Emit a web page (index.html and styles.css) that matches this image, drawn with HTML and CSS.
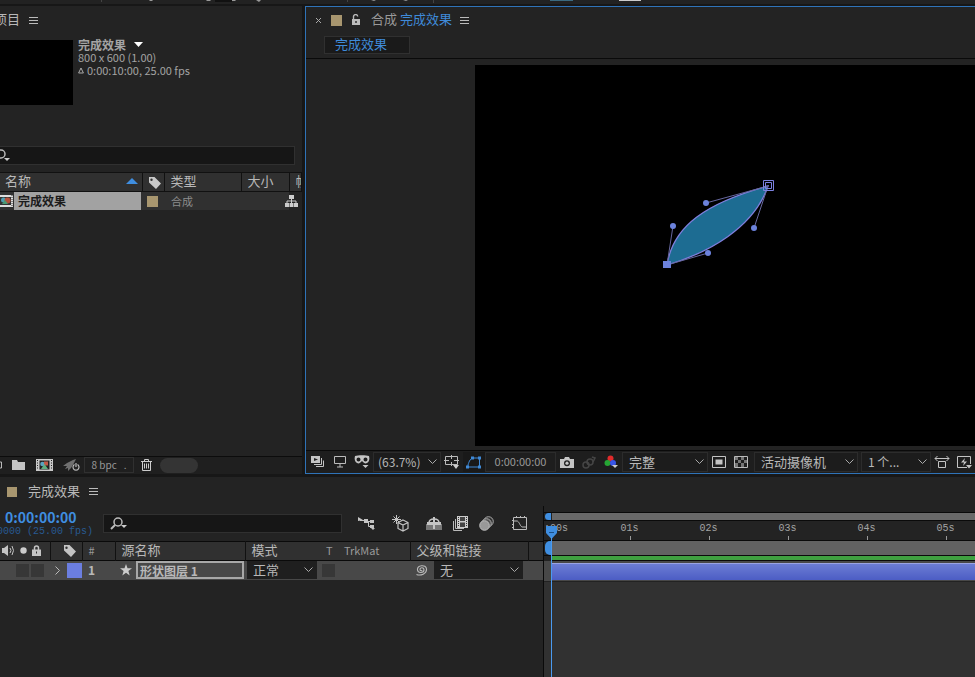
FILE: index.html
```html
<!DOCTYPE html>
<html lang="zh-CN">
<head>
    <meta charset="UTF-8">
    <meta name="viewport" content="width=device-width, initial-scale=1.0">
    <title>完成效果</title>
    <link rel="stylesheet" href="styles.css">
</head>
<body>

    <div class="toolbar">
        <svg width="700" height="3" viewBox="0 0 700 3">
            <path fill="#999" d="M149 0h4l-1 1h-2zM206 0h5l-1 1h-3zM231 0h5l-1 1h-3zM256 0h5l-2 2zM371 0h5l-2 1zM403 0h5l-2 1z"/>
            <path fill="#111" d="M215 0h17v2h-17z"/>
            <path fill="#444" d="M101 0h1v2h-1zM347 0h1v2h-1zM433 0h1v3h-1z"/>
            <path fill="#3b6a80" d="M550 0h23v1h-23z"/>
            <path fill="#ccc" d="M619 0h22v1h-22z"/>
        </svg>
    </div>

    <div class="workspace">
        <section class="panel project">
            <header class="panel-header project-header">
                <h2>项目</h2>
                <button class="menu" aria-label="面板菜单"><svg width="9" height="9" viewBox="0 0 9 9"><path d="M0 1.500h9M0 4.500h9M0 7.500h9"/></svg></button>
            </header>

            <div class="info">
                <div class="thumb"></div>
                <div class="info-text">
                    <strong>完成效果 <svg width="9" height="5" viewBox="0 0 9 5"><path fill="#fff" d="M0 0h9L4.500 5z"/></svg></strong>
                    <p>800 x 600 (1.00)</p>
                    <p><svg width="6" height="7" viewBox="0 0 6 7"><path fill="none" stroke="#aaa" d="M3 1L.6 6h4.800z"/></svg> 0:00:10:00, 25.00 fps</p>
                </div>
            </div>

            <label class="search project-search">
                <svg width="18" height="14" viewBox="0 0 18 14"><circle cx="8" cy="5" r="4" fill="none" stroke="#bbb" stroke-width="1.500"/><path d="M5 8L1 12" stroke="#bbb" stroke-width="2"/><path fill="#ccc" d="M11 9h6l-3 3z"/></svg>
                <input type="search" aria-label="搜索项目">
            </label>

            <table class="files">
                <colgroup><col class="f-name"><col class="f-label"><col class="f-type"><col class="f-size"><col></colgroup>
                <thead>
                    <tr>
                        <th><span class="sorted">名称 <svg width="12" height="6" viewBox="0 0 12 6"><path fill="#3f8ee0" d="M0 6l6-6 6 6z"/></svg></span></th>
                        <th class="icon-cell"><svg width="13" height="13" viewBox="0 0 13 13"><path fill="#c8c8c8" fill-rule="evenodd" d="M1 1h5.500L13 7.500 8 13 1 6.500zM3.500 2.500a1.200 1.200 0 100 2.400 1.200 1.200 0 000-2.400z"/></svg></th>
                        <th>类型</th>
                        <th>大小</th>
                        <th>帧</th>
                    </tr>
                </thead>
                <tbody>
                    <tr>
                        <td class="file-name">
                            <span class="file"><svg width="14" height="14" viewBox="0 0 14 14"><path fill="#ddd" d="M0 1h13v12H0z"/><path fill="#333" d="M0 3h11v8H0z"/><path stroke="#333" stroke-dasharray="1 1" d="M12 1v12"/><circle cx="3.500" cy="6" r="2.500" fill="#4d9eb0"/><circle cx="7.500" cy="6.500" r="3" fill="#b4503c"/><path fill="#4a9a72" d="M2 10l3-4 3 4z"/></svg><b>完成效果</b></span>
                        </td>
                        <td class="icon-cell"><i class="swatch"></i></td>
                        <td class="kind">合成</td>
                        <td></td>
                        <td class="flow"><svg width="13" height="12" viewBox="0 0 13 12"><path fill="#ccc" d="M4 0h5v4H4zM0 8h4v4H0zM4.500 8h4v4h-4zM9 8h4v4H9z"/><path fill="none" stroke="#ccc" d="M6.500 4v4M2 8V6h9v2"/></svg></td>
                    </tr>
                </tbody>
            </table>

            <footer class="project-footer">
                <button class="cut" aria-label="解释素材"><svg width="8" height="10" viewBox="0 0 8 10"><path fill="none" stroke="#bbb" d="M0 2h7.500v6H0"/></svg></button>
                <button aria-label="新建文件夹"><svg width="14" height="12" viewBox="0 0 14 12"><path fill="#c4c4c4" d="M0 1h5l1 2h7v8H0z"/></svg></button>
                <button aria-label="新建合成"><svg width="17" height="12" viewBox="0 0 17 12"><path fill="#c8c8c8" d="M0 0h17v12H0z"/><path fill="#222" d="M3.500 1.500h10v9h-10z"/><path stroke="#222" stroke-dasharray="1 1.500" d="M1.500 1v10M15.500 1v10"/><circle cx="6.500" cy="5" r="2.300" fill="#5aa4c0"/><path fill="#c05a48" d="M8 2.500h4v4H8z"/><path fill="#5fae80" d="M5 10l3.500-5L12 10z"/></svg></button>
                <button aria-label="项目设置"><svg width="17" height="13" viewBox="0 0 17 13"><path fill="#707070" d="M0 7l4-3 6-3 3-1-2 4-3 5-3 3V9L2 10l2-3z"/><circle cx="13" cy="8" r="3.500" fill="#232323"/><path fill="none" stroke="#bbb" stroke-width="1.200" d="M11.500 5.500a3 3 0 103 0M13 4v4"/></svg></button>
                <button class="bpc">8 bpc <span>.</span></button>
                <button class="trash" aria-label="删除"><svg width="11" height="12" viewBox="0 0 11 12"><path fill="none" stroke="#ccc" d="M0 2.500h11M3.500 2V.5h4V2M1.500 3v8.500h8V3M3.500 4.500v5M5.500 4.500v5M7.500 4.500v5"/></svg></button>
                <span class="pill"></span>
            </footer>
        </section>

        <section class="panel comp">
            <header class="panel-header comp-header">
                <button class="close" aria-label="关闭"><svg width="5" height="5" viewBox="0 0 5 5"><path stroke="#aaa" d="M0 0l5 5M5 0L0 5"/></svg></button>
                <i class="swatch"></i>
                <button class="lock" aria-label="锁定"><svg width="10" height="12" viewBox="0 0 10 12"><path fill="none" stroke="#bbb" stroke-width="1.400" d="M2.500 6V3a2 2 0 014.200-.5"/><path fill="#bbb" fill-rule="evenodd" d="M1 5h8v6H1zM4.300 7v2h1.400V7z"/></svg></button>
                <h2><span>合成</span> 完成效果</h2>
                <button class="menu" aria-label="面板菜单"><svg width="9" height="9" viewBox="0 0 9 9"><path d="M0 1.500h9M0 4.500h9M0 7.500h9"/></svg></button>
            </header>
            <nav class="crumbs"><button>完成效果</button></nav>

            <div class="stage">
                <div class="canvas">
                    <svg class="leaf" width="120" height="100" viewBox="0 0 120 100">
                        <path fill="#1d6c92" stroke="#7f7fdc" stroke-width="1.300" d="M11 89C17 50 50 27 112 10C98 52 52 77 11 89z"/>
                        <path stroke="#66679f" d="M11 89L17 50M11 89L52 77M112 10L50 27M112 10L98 52"/>
                        <g fill="#6c82dc"><circle cx="17" cy="50" r="3"/><circle cx="52" cy="77" r="3"/><circle cx="50" cy="27" r="3"/><circle cx="98" cy="52" r="3"/><path d="M7 85h8v7H7z"/></g>
                        <path fill="none" stroke="#7c82e0" d="M107.500 4.500h10v10h-10zM109.500 6.500h6v6h-6z"/>
                    </svg>
                </div>
            </div>

            <footer class="comp-footer">
                <button aria-label="始终预览此视图"><svg width="14" height="12" viewBox="0 0 14 12"><path fill="#c4c4c4" d="M0 0h9v7H0z"/><path fill="#222" d="M3 2l4 1.500L3 5z"/><path fill="none" stroke="#c4c4c4" d="M10.500 2v6.500H3M12.500 4.500v6H5"/></svg></button>
                <button aria-label="主查看器"><svg width="12" height="12" viewBox="0 0 12 12"><path fill="none" stroke="#bbb" d="M.5.5h11v7H.5zM6 8v3M3 11h6"/></svg></button>
                <button aria-label="蒙版"><svg width="16" height="14" viewBox="0 0 16 14"><path fill="#c4c4c4" fill-rule="evenodd" d="M1 1c3-1 11-1 14 0 1 3 0 6-2 7-2 1-3 0-5-2-2 2-3 3-5 2C1 7 0 4 1 1zM4.500 2.500a2 2 0 100 4 2 2 0 000-4zM11.500 2.500a2 2 0 100 4 2 2 0 000-4zM8.500 10h6l-3 3z"/></svg></button>
                <span class="pick"><select class="zoom" aria-label="放大率"><option>(63.7%)</option></select><svg width="9" height="6" viewBox="0 0 9 6"><path d="M.5.5l4 4 4-4"/></svg></span>
                <button aria-label="网格和参考线"><svg width="16" height="14" viewBox="0 0 16 14"><path fill="none" stroke="#bbb" d="M1.500 1.500h12v8h-12zM7.500 0v4M7.500 7v4M0 5.500h5M10 5.500h5"/><path fill="#ccc" d="M9 10h6l-3 4z"/></svg></button>
                <button class="active" aria-label="形状路径"><svg width="16" height="13" viewBox="0 0 16 13"><path fill="none" stroke="#3f8ad8" d="M2 11V9c1-4 3-7 5-7h6.500v9z"/><path fill="#3f8ad8" d="M0 9.500h3v3H0zM5 .5h3v3H5zM12 .5h3v3h-3zM12 9.500h3v3h-3z"/></svg></button>
                <button class="time">0:00:00:00</button>
                <button aria-label="拍摄快照"><svg width="14" height="11" viewBox="0 0 14 11"><path fill="#c4c4c4" fill-rule="evenodd" d="M0 2h4l1-2h4l1 2h4v9H0zM7 3.200a3 3 0 100 6 3 3 0 000-6z"/><circle cx="7" cy="6.200" r="1.600" fill="#c4c4c4"/></svg></button>
                <button aria-label="显示快照"><svg width="14" height="13" viewBox="0 0 14 13"><g fill="none" stroke="#454545" stroke-width="1.500"><circle cx="4" cy="9" r="3"/><circle cx="8" cy="6" r="3"/><path d="M10 1l3 1-2 4"/></g></svg></button>
                <button aria-label="通道"><svg width="14" height="14" viewBox="0 0 14 14"><circle cx="6.500" cy="3.500" r="3" fill="#e02b2b"/><circle cx="3.500" cy="8" r="3" fill="#26a534"/><circle cx="9" cy="8" r="3" fill="#3855e8"/><path fill="#ccc" d="M8 10h6l-3 3z"/></svg></button>
                <span class="pick"><select class="quality" aria-label="分辨率"><option>完整</option></select><svg width="9" height="6" viewBox="0 0 9 6"><path d="M.5.5l4 4 4-4"/></svg></span>
                <button aria-label="目标区域"><svg width="14" height="12" viewBox="0 0 14 12"><path fill="none" stroke="#c4c4c4" d="M.5.5h13v11H.5z"/><path fill="#c4c4c4" d="M3.500 3.500h7v5h-7z"/></svg></button>
                <button aria-label="透明网格"><svg width="14" height="12" viewBox="0 0 14 12"><path fill="none" stroke="#bbb" d="M.5.5h13v11H.5z"/><path fill="#777" d="M1 1h3v3H1zM7 1h3v3H7zM4 4h3v3H4zM10 4h3v3h-3zM1 7h3v4H1zM7 7h3v4H7z"/></svg></button>
                <span class="pick camera-pick"><select class="camera" aria-label="3D 视图"><option>活动摄像机</option></select><svg width="9" height="6" viewBox="0 0 9 6"><path d="M.5.5l4 4 4-4"/></svg></span>
                <span class="pick view-pick"><select class="views" aria-label="视图布局"><option>1 个...</option></select><svg width="9" height="6" viewBox="0 0 9 6"><path d="M.5.5l4 4 4-4"/></svg></span>
                <button aria-label="像素长宽比校正"><svg width="16" height="12" viewBox="0 0 16 12"><path fill="none" stroke="#c4c4c4" d="M1 2.500h14M3.500 0L1 2.500 3.500 5M12.500 0L15 2.500 12.500 5M4.500 5.500h7v6h-7z"/></svg></button>
                <button aria-label="快速预览"><svg width="15" height="13" viewBox="0 0 15 13"><path fill="none" stroke="#c4c4c4" d="M10 11.500H.5V.5h13V8"/><path fill="#c4c4c4" d="M8 2L4 6.500h3L6 10l4-4.500H7zM9 9h6l-3 3.500z"/></svg></button>
            </footer>
        </section>
    </div>

    <section class="panel timeline">
        <header class="panel-header timeline-header">
            <i class="swatch"></i>
            <h2>完成效果</h2>
            <button class="menu" aria-label="面板菜单"><svg width="9" height="9" viewBox="0 0 9 9"><path d="M0 1.500h9M0 4.500h9M0 7.500h9"/></svg></button>
        </header>

        <div class="timeline-body">
            <div class="layers">
                <div class="layer-tools">
                    <div class="clock">
                        <strong>0:00:00:00</strong>
                        <span>0000 (25.00 fps)</span>
                    </div>
                    <label class="search layer-search">
                        <svg width="18" height="14" viewBox="0 0 18 14"><circle cx="8" cy="5" r="4" fill="none" stroke="#bbb" stroke-width="1.500"/><path d="M5 8L1 12" stroke="#bbb" stroke-width="2"/><path fill="#ccc" d="M11 8h6l-3 3z"/></svg>
                        <input type="search" aria-label="搜索图层">
                    </label>
                    <button aria-label="合成微型流程图"><svg width="17" height="13" viewBox="0 0 17 13"><path fill="#c4c4c4" d="M0 0l5 3-5 1zM6 2h4v4H6zM12 3h4v3h-4zM12 8h4v3h-4zM13 11h4l-2 2z"/><path fill="none" stroke="#c4c4c4" d="M2 3.500h4M10 4.500h2M10.500 4.500v5H12"/></svg></button>
                    <button aria-label="草图 3D"><svg width="17" height="17" viewBox="0 0 17 17"><g fill="none" stroke="#c4c4c4"><path d="M4.500 0v9M0 4.500h9M1.500 1.500l6 6M7.500 1.500l-6 6"/><path fill="#222" stroke-width="1.200" d="M11 5l5 2.500v6L11 16l-5-2.500v-6zM6 7.500l5 2.500 5-2.500M11 10v6"/></g></svg></button>
                    <span class="tool-group">
                        <button aria-label="隐藏图层"><svg width="16" height="13" viewBox="0 0 16 13"><path fill="#777" d="M0 7h16v6H0z"/><path fill="none" stroke="#c4c4c4" stroke-width="1.500" d="M3 6c0-3 2-4 5-4s5 1 5 4"/><path fill="#c4c4c4" d="M7 0h2v12H7zM1 5h14v3H1z"/></svg></button>
                        <button aria-label="帧混合"><svg width="15" height="15" viewBox="0 0 15 15"><path fill="none" stroke="#bbb" d="M2.500 3v9.500H11M.5 5v9.500H9"/><path fill="#ccc" d="M4 0h11v12H4z"/><path fill="#444" d="M7 1h5v4H7zM7 6.500h5V11H7z"/><path stroke="#333" stroke-dasharray="1 1" d="M5.500 1v10M13.500 1v10"/></svg></button>
                        <button aria-label="运动模糊"><svg width="15" height="15" viewBox="0 0 15 15"><circle cx="9.500" cy="5.500" r="4.800" fill="#333" stroke="#aaa"/><circle cx="7.500" cy="7.500" r="4.800" fill="#555" stroke="#aaa"/><circle cx="5.500" cy="9.500" r="4.800" fill="#999" stroke="#bbb"/></svg></button>
                    </span>
                    <button aria-label="图表编辑器"><svg width="16" height="15" viewBox="0 0 16 15"><path fill="none" stroke="#bbb" d="M1.500 1.500h13v12h-13zM1.500 5H5c2 0 3 5 5 6h4.500M4.500 0v2M8.500 0v2M12.500 0v2M0 4.500h2M0 8.500h2M0 11.500h2"/></svg></button>
                </div>

                <table class="layer-table">
                    <colgroup><col class="l-switch"><col class="l-label"><col class="l-num"><col class="l-name"><col class="l-mode"><col class="l-t"><col class="l-mat"><col class="l-parent"><col></colgroup>
                    <thead>
                        <tr>
                            <th class="sep"><span class="switches">
                                <svg width="13" height="11" viewBox="0 0 13 11"><path fill="#c4c4c4" d="M0 3h2l4-3v11L2 8H0z"/><path fill="none" stroke="#c4c4c4" d="M8 3q2 2.500 0 5M10 1q3 4.500 0 9"/></svg>
                                <svg width="7" height="7" viewBox="0 0 7 7"><circle cx="3.500" cy="3.500" r="3.200" fill="#ccc"/></svg>
                                <svg width="9" height="11" viewBox="0 0 9 11"><path fill="none" stroke="#c4c4c4" stroke-width="1.500" d="M2.500 5V3a2 2 0 014 0v2"/><path fill="#c4c4c4" fill-rule="evenodd" d="M0 4.500h9V11H0zM4 6.500v2h1v-2z"/></svg>
                            </span></th>
                            <th class="sep tag"><svg width="13" height="13" viewBox="0 0 13 13"><path fill="#c4c4c4" fill-rule="evenodd" d="M1 1h5.500L13 7.500 8 13 1 6.500zM3.500 2.500a1.200 1.200 0 100 2.400 1.200 1.200 0 000-2.400z"/></svg></th>
                            <th class="sep small">#</th>
                            <th class="sep">源名称</th>
                            <th>模式</th>
                            <th class="small t">T</th>
                            <th class="sep small mat">TrkMat</th>
                            <th class="sep">父级和链接</th>
                            <th></th>
                        </tr>
                    </thead>
                    <tbody>
                        <tr>
                            <td><span class="boxes"><i></i><i></i></span></td>
                            <td><span class="label-cell"><button aria-label="展开"><svg width="5" height="9" viewBox="0 0 5 9"><path fill="none" stroke="#bbb" d="M.5.500l4 4-4 4"/></svg></button><i class="label-color"></i></span></td>
                            <td class="num">1</td>
                            <td><span class="layer-name"><svg width="12" height="12" viewBox="0 0 12 12"><path fill="#ccc" d="M6 0l1.500 4.200 4.500.1-3.600 2.700L9.700 11.500 6 8.800l-3.700 2.700L3.600 7 0 4.300l4.500-.1z"/></svg><input type="text" value="形状图层 1" aria-label="图层名称"></span></td>
                            <td><span class="pick dark"><select aria-label="模式"><option>正常</option></select><svg width="9" height="6" viewBox="0 0 9 6"><path d="M.5.5l4 4 4-4"/></svg></span></td>
                            <td><span class="boxes matte"><i></i></span></td>
                            <td></td>
                            <td><span class="parent"><svg width="13" height="12" viewBox="0 0 13 12"><path fill="none" stroke="#bbb" stroke-width="1.100" d="M7 6c0 1-2 1-2-.5C5 3 9 3 9 6c0 3-6 3.500-6.500 0C2 1 11 0 11.500 5c.5 5-6 7-10 5.500"/></svg><span class="pick dark"><select aria-label="父级和链接"><option>无</option></select><svg width="9" height="6" viewBox="0 0 9 6"><path d="M.5.5l4 4 4-4"/></svg></span></span></td>
                            <td></td>
                        </tr>
                    </tbody>
                </table>
            </div>

            <div class="tracks">
                <div class="navigator"><i></i></div>
                <ol class="ruler">
                    <li>:00s</li>
                    <li>01s</li>
                    <li>02s</li>
                    <li>03s</li>
                    <li>04s</li>
                    <li>05s</li>
                </ol>
                <div class="work-area"><i></i></div>
                <div class="cache"></div>
                <div class="track"><div class="clip"></div></div>
                <div class="playhead"><svg width="13" height="15" viewBox="0 0 13 15"><path fill="#3f8ee0" d="M1 1h11v7l-5.500 6L1 8z"/><path stroke="#1c4f88" d="M4 7.500h5"/></svg></div>
            </div>
        </div>
    </section>

</body>
</html>
```
FILE: styles.css
```css
* {
    box-sizing: border-box;
}
body {
    margin: 0;
    min-height: 100vh;
    display: flex;
    flex-direction: column;
    overflow: hidden;
    background: #171717;
    color: #b8b8b8;
    font-family: "Noto Sans CJK SC", "Noto Sans", sans-serif;
    font-size: 13px;
    line-height: 16px;
}
svg {
    display: block;
    flex: none;
}
h2, p {
    margin: 0;
    font-size: 13px;
    font-weight: normal;
}
h2 {
    padding-bottom: 2px;
}
button, input, select {
    margin: 0;
    padding: 0;
    border: 0;
    background: none;
    color: inherit;
    font: inherit;
    appearance: none;
    outline: none;
}
button {
    display: flex;
    align-items: center;
    justify-content: center;
    flex: none;
}
.toolbar {
    height: 4px;
    background: #222;
    overflow: hidden;
}
.workspace {
    display: grid;
    grid-template-columns: 302px 1fr;
    gap: 3px;
    margin: 2px 0 3px;
}
.panel {
    background: #232323;
    display: flex;
    flex-direction: column;
    min-width: 0;
}
.panel-header {
    display: flex;
    align-items: center;
    height: 28px;
    flex: none;
    white-space: nowrap;
}
.menu svg {
    stroke: #bbb;
}
.swatch {
    display: block;
    width: 11px;
    height: 11px;
    background: #a8966f;
    flex: none;
}

/* project panel */
.project {
    overflow: hidden;
}
.project-header h2 {
    margin: 0 9px 0 -6px;
}
.info {
    display: flex;
    align-items: flex-start;
    gap: 5px;
    margin-top: 6px;
}
.thumb {
    width: 73px;
    height: 65px;
    background: #000;
}
.info-text {
    margin-top: -2px;
    font-size: 11px;
    line-height: 13px;
    color: #a4a4a4;
}
.info-text strong {
    display: flex;
    align-items: center;
    gap: 8px;
    font-size: 12px;
}
.info-text p {
    display: flex;
    align-items: center;
    gap: 3px;
    font-size: 11px;
}
.search {
    display: flex;
    align-items: center;
    height: 19px;
    background: #161616;
    border: 1px solid #303030;
}
.search input {
    flex: 1;
    min-width: 0;
}
.project-search {
    margin: 41px 7px 7px -8px;
}
table {
    width: 100%;
    table-layout: fixed;
    border-collapse: collapse;
}
th {
    padding: 0 0 2px 6px;
    text-align: left;
    font-weight: normal;
    white-space: nowrap;
    overflow: hidden;
}
td {
    padding: 0;
}
.files th {
    height: 18px;
    background: #303030;
    border-right: 1px solid #111;
    line-height: 16px;
}
.files thead {
    border-top: 1px solid #111;
    border-bottom: 1px solid #111;
}
.files tbody tr {
    height: 18px;
    background: #303030;
}
.f-name {
    width: 142px;
}
.f-label {
    width: 22px;
}
.f-type {
    width: 77px;
}
.f-size {
    width: 48px;
}
.files th:first-child {
    padding-left: 5px;
}
.sorted {
    display: flex;
    align-items: center;
    justify-content: space-between;
    padding-right: 4px;
}
.files .icon-cell {
    padding: 0 0 0 5px;
}
.file {
    display: flex;
    align-items: center;
    padding-right: 1px;
}
.file b {
    flex: 1;
    padding-left: 4px;
    background: #a2a2a2;
    color: #1c1c1c;
    font-size: 12px;
    line-height: 18px;
}
.kind {
    padding-left: 7px;
    font-size: 11px;
    color: #8c8c8c;
}
.files .flow {
    background: #232323;
}
.flow svg {
    margin-left: -4px;
}
.project-footer {
    display: flex;
    align-items: center;
    gap: 10px;
    height: 18px;
    margin-top: auto;
    padding-bottom: 1px;
    border-top: 1px solid #0c0c0c;
    background: #1f1f1f;
}
.project-footer .cut {
    width: 2px;
    overflow: hidden;
    justify-content: flex-end;
}
.bpc {
    width: 50px;
    height: 16px;
    gap: 7px;
    margin-left: -6px;
    border: 1px solid #303030;
    font-size: 10px;
    color: #999;
}
.trash {
    margin-left: -3px;
}
.pill {
    width: 38px;
    height: 15px;
    margin-left: -2px;
    border-radius: 8px;
    background: #343434;
}

/* composition viewer */
.comp {
    border: 1px solid #2f73b8;
    border-right: 0;
    overflow: hidden;
}
.comp-header {
    height: 26px;
    padding-left: 10px;
}
.comp-header .swatch {
    margin: 0 9px 0 10px;
}
.comp-header h2 {
    margin: 0 8px 0 10px;
    color: #3f8ad8;
}
.comp-header h2 span {
    color: #999;
}
.crumbs {
    padding: 3px 18px 4px;
    border-bottom: 1px solid #0a0a0a;
}
.crumbs button {
    width: 86px;
    height: 18px;
    padding: 0 12px 2px 0;
    background: #1a1a1a;
    border: 1px solid #303030;
    color: #3f8ad8;
}
.stage {
    padding: 6px 0 4px 169px;
    border-bottom: 1px solid #0a0a0a;
    flex: 1;
}
.canvas {
    position: relative;
    height: 381px;
    background: #000;
}
.leaf {
    position: absolute;
    left: 181px;
    top: 111px;
}
.comp-footer {
    display: flex;
    align-items: center;
    height: 22px;
    padding-left: 1px;
    background: #1e1e1e;
}
.comp-footer button {
    width: 22px;
    height: 20px;
}
.comp-footer .time {
    width: 71px;
    padding-bottom: 2px;
    border: 1px solid #2c2c2c;
    font-size: 11px;
    color: #999;
}
.comp-footer .active {
    background: #191919;
}
.pick {
    display: grid;
    align-items: center;
}
.pick select, .pick svg {
    grid-area: 1 / 1;
}
.pick svg {
    justify-self: end;
    margin-right: 4px;
    fill: none;
    stroke: #aaa;
    pointer-events: none;
}
.pick select {
    width: 100%;
    height: 20px;
    padding-left: 6px;
    border: 1px solid #2c2c2c;
    background: #1c1c1c;
}
.pick .zoom {
    width: 68px;
    padding-left: 4px;
    font-size: 12px;
}
.pick .quality {
    width: 86px;
}
.pick .camera {
    width: 104px;
}
.pick .views {
    width: 70px;
    font-size: 12px;
}
.camera-pick {
    margin: 0 3px 0 2px;
}

/* timeline */
.timeline {
    flex: 1;
}
.timeline-header {
    height: 29px;
    padding-left: 7px;
}
.timeline-header h2 {
    margin: 0 9px 0 11px;
}
.timeline-header .swatch {
    width: 10px;
    height: 10px;
}
.timeline-body {
    flex: 1;
    display: grid;
    grid-template-columns: 544px 1fr;
}
.layers {
    border-right: 1px solid #0a0a0a;
}
.layer-tools {
    display: flex;
    align-items: center;
    height: 35px;
}
.clock {
    width: 103px;
    white-space: nowrap;
    overflow: hidden;
}
.clock strong {
    display: block;
    padding-left: 5px;
    color: #3f8ee0;
    font-size: 14px;
    line-height: 16px;
}
.clock span {
    display: block;
    margin-left: -3px;
    color: #285a92;
    font: 10px/14px "Liberation Mono", monospace;
}
.layer-search {
    width: 239px;
    margin-right: 11px;
    padding-left: 6px;
}
.layer-tools button {
    width: 26px;
    height: 26px;
    margin-right: 8px;
}
.tool-group {
    display: flex;
    margin-right: 8px;
}
.tool-group button {
    margin-right: 0;
}
.layer-table thead {
    border-top: 1px solid #0a0a0a;
    border-bottom: 1px solid #0a0a0a;
}
.layer-table th {
    height: 19px;
    background: #303030;
}
.layer-table .sep {
    border-right: 1px solid #111;
}
.layer-table .small {
    font-size: 11px;
    color: #999;
}
.layer-table .t {
    padding-left: 8px;
}
.layer-table .mat {
    padding-left: 4px;
}
.layer-table .tag {
    padding-left: 12px;
}
.l-switch {
    width: 50px;
}
.l-label {
    width: 32px;
}
.l-num {
    width: 33px;
}
.l-name {
    width: 130px;
}
.l-mode {
    width: 73px;
}
.l-t {
    width: 22px;
}
.l-mat {
    width: 70px;
}
.l-parent {
    width: 118px;
}
.layer-table th:first-child {
    padding-left: 2px;
}
.switches {
    display: flex;
    align-items: center;
    gap: 5px;
}
.layer-table tbody tr {
    height: 19px;
    background: #484848;
}
.boxes {
    display: flex;
    gap: 2px;
    padding-left: 16px;
}
.boxes i {
    width: 13px;
    height: 13px;
    background: #373737;
}
.matte {
    padding-left: 4px;
}
.label-cell {
    display: flex;
    align-items: center;
    justify-content: flex-end;
    gap: 7px;
}
.label-color {
    width: 15px;
    height: 15px;
    background: #6b7ee0;
}
.num {
    padding-left: 6px;
    font-size: 12px;
    font-weight: bold;
}
.layer-name {
    display: flex;
    align-items: center;
    gap: 4px;
    padding: 0 1px 0 5px;
}
.layer-name input {
    flex: 1;
    min-width: 0;
    height: 18px;
    padding-left: 2px;
    border: 2px solid #a8a8a8;
    font-size: 12px;
    font-weight: bold;
}
.dark {
    flex: 1;
    padding: 0 1px 0 2px;
}
.dark select {
    height: 18px;
    border: 0;
    background: #1f1f1f;
}
.parent {
    display: flex;
    align-items: center;
    gap: 4px;
    padding: 0 4px 0 5px;
}
.tracks {
    position: relative;
    display: flex;
    flex-direction: column;
    min-width: 0;
    padding-top: 6px;
    overflow: hidden;
}
.navigator, .work-area {
    display: flex;
    border-top: 1px solid #0a0a0a;
    border-bottom: 1px solid #0a0a0a;
    padding-left: 1px;
}
.navigator::after, .work-area::after {
    content: "";
    flex: 1;
    margin-left: 1px;
    background: #696969;
}
.navigator {
    height: 9px;
}
.work-area {
    height: 16px;
}
.work-area::after {
    background: #626262;
}
.navigator i, .work-area i {
    width: 6px;
    border-radius: 5px 0 0 5px;
    background: #3f8ee0;
}
.ruler {
    display: flex;
    height: 19px;
    margin: 0;
    padding: 0;
    list-style: none;
    font: 10px/15px "Liberation Mono", monospace;
    color: #a4a4a4;
}
.ruler li {
    position: relative;
    flex: none;
    width: 79px;
    text-align: center;
}
.ruler li:first-child {
    width: 46px;
    text-align: left;
}
.ruler li:not(:first-child)::after {
    content: "";
    position: absolute;
    left: 40px;
    bottom: 0;
    width: 1px;
    height: 4px;
    background: #999;
}
.cache {
    height: 5px;
    margin-left: 8px;
    background: #3fa040;
    border-bottom: 1px solid #0a0a0a;
}
.track {
    padding: 2px 0 1px 8px;
    background: #484848;
}
.clip {
    height: 17px;
    border-top: 1px solid #9aa4e4;
    background: linear-gradient(#6c7dd4, #4c5dc4);
}
.playhead {
    position: absolute;
    left: 1px;
    top: 19px;
    bottom: 0;
}
.playhead::after {
    content: "";
    position: absolute;
    left: 6px;
    top: 12px;
    bottom: 0;
    width: 1px;
    background: #4a9af0;
}
.tracks::after {
    content: "";
    flex: 1;
    background: #313131;
    border-top: 1px solid #222;
}
```
